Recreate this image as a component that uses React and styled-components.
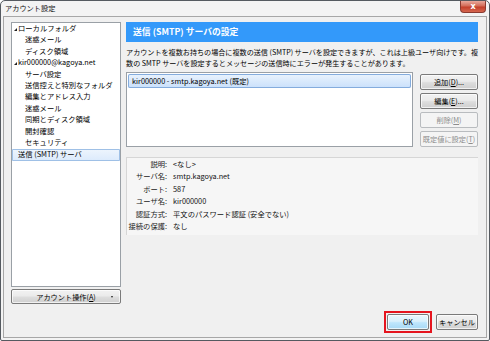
import { Fragment } from 'react'
import styled, { createGlobalStyle, css } from 'styled-components'

const GlobalStyle = createGlobalStyle`
    html, body {
        margin: 0;
        padding: 0;
        background: #ffffff;
    }
    body {
        font-family: "Noto Sans CJK JP", "Noto Sans", sans-serif;
        color: #000;
    }
`

const Window = styled.div`
    width: 490px;
    height: 341px;
    box-sizing: border-box;
    border: 1px solid #555a60;
    border-radius: 5px 5px 2px 2px;
    background: #f3f3f3;
    display: flex;
    flex-direction: column;
    overflow: hidden;
`

const TitleBar = styled.div`
    height: 15px;
    display: flex;
    align-items: flex-start;
    justify-content: space-between;
    padding-left: 4px;
`

const TitleText = styled.span`
    font-size: 7.2px;
    line-height: 15px;
    color: #111;
`

const CloseButton = styled.div`
    width: 26px;
    height: 12px;
    margin-right: 3px;
    border: 1px solid #8a3a30;
    border-top: none;
    border-radius: 0 0 4px 4px;
    background: linear-gradient(#e9a99c, #d36c58 45%, #c4402b 55%, #d5664f);
    color: #fff;
    font-family: "DejaVu Sans", sans-serif;
    font-weight: bold;
    font-size: 8px;
    line-height: 11px;
    text-align: center;
    box-sizing: border-box;
`

const Body = styled.div`
    flex: 1;
    margin: 0 2px 2px 2px;
    border: 1px solid #a7a7a7;
    background: #f0f0f0;
    display: flex;
    padding: 5px 8px 7px 7px;
    gap: 5px;
`

const LeftColumn = styled.div`
    width: 111px;
    display: flex;
    flex-direction: column;
    gap: 2px;
    margin-bottom: 26px;
`

const Tree = styled.div`
    flex: 1;
    background: #fff;
    border: 1px solid #9aa0a6;
`

const TreeRow = styled.div`
    height: 11.4px;
    line-height: 11.4px;
    box-sizing: border-box;
    font-size: 7.3px;
    display: flex;
    align-items: center;
    padding-left: ${p => p.$indent}px;
    white-space: nowrap;
    ${p => p.$selected && css`
        background: linear-gradient(#eef5fd, #dbeafc);
        box-shadow: inset 0 0 0 1px #9fc0e6;
        border-radius: 1px;
        height: 12px;
        margin-top: 0.3px;
    `}
`

const Arrow = styled.span`
    width: 0;
    height: 0;
    border-left: 3px solid transparent;
    border-bottom: 3px solid #222;
    margin-right: 1px;
    margin-top: 2px;
`

const Button = styled.div`
    box-sizing: border-box;
    height: 16px;
    border: 1px solid ${p => (p.$disabled ? '#b9bcbf' : '#7a7a7a')};
    border-radius: 2px;
    background: ${p =>
        p.$disabled
            ? '#f4f4f4'
            : p.$primary
            ? 'linear-gradient(#eaf6fd, #d9f0fc 45%, #bee6fd 55%, #a7d9f5)'
            : 'linear-gradient(#f2f2f2, #ebebeb 45%, #dddddd 55%, #cfcfcf)'};
    color: ${p => (p.$disabled ? '#8d8d8d' : '#000')};
    font-size: 7.2px;
    line-height: 14px;
    text-align: center;
    white-space: nowrap;
    box-shadow: inset 0 0 0 1px ${p => (p.$disabled ? 'transparent' : 'rgba(255,255,255,0.7)')};
`

const AccountButton = styled(Button)`
    height: 15px;
    display: flex;
    align-items: center;
    justify-content: center;
    position: relative;
`

const Dot = styled.span`
    position: absolute;
    right: 7px;
    top: 6px;
    width: 0;
    height: 0;
    border-left: 1.5px solid transparent;
    border-right: 1.5px solid transparent;
    border-top: 2px solid #222;
`

const RightColumn = styled.div`
    flex: 1;
    display: flex;
    flex-direction: column;
`

const Header = styled.div`
    height: 20px;
    background: #3399fa;
    color: #fff;
    font-weight: bold;
    font-size: 8.8px;
    line-height: 20px;
    padding-left: 7px;
`

const Description = styled.p`
    margin: 5px 0 3px 0;
    font-size: 7.1px;
    line-height: 11px;
    white-space: nowrap;
`

const ListRow = styled.div`
    display: flex;
    gap: 7px;
    height: 75px;
`

const ListBox = styled.div`
    flex: 1;
    background: #fff;
    border: 1px solid #9aa0a6;
    padding: 1px;
`

const ListItem = styled.div`
    height: 14px;
    line-height: 14px;
    font-size: 7.3px;
    padding-left: 4px;
    background: linear-gradient(#eaf3fd, #c9e0fb);
    box-shadow: inset 0 0 0 1px #84acdd;
    border-radius: 2px;
`

const ButtonColumn = styled.div`
    width: 58px;
    display: flex;
    flex-direction: column;
    gap: 3px;
    padding-top: 2px;
`

const Details = styled.div`
    margin-top: 10px;
    background: #f6f6f6;
    border-top: 1px solid #d6d6d6;
    border-left: 1px solid #d6d6d6;
    display: grid;
    grid-template-columns: 40px 1fr;
    column-gap: 6px;
    grid-auto-rows: 12.4px;
    padding-bottom: 3px;
    font-size: 7.3px;
    line-height: 12.4px;
`

const Label = styled.span`
    text-align: right;
    white-space: nowrap;
    color: #222;
`

const Value = styled.span`
    white-space: nowrap;
    color: #111;
`

const Footer = styled.div`
    margin-top: auto;
    display: flex;
    justify-content: flex-end;
    align-items: center;
    gap: 4px;
`

const FocusFrame = styled.div`
    border: 2px solid #e5141e;
    padding: 1px;
    margin: -3px 0;
`

const FooterButton = styled(Button)`
    width: 42px;
    height: 16px;
`

const Key = styled.span`
    text-decoration: underline;
`

const rows = [
    { text: 'ローカルフォルダ', indent: 2, parent: true },
    { text: '迷惑メール', indent: 13 },
    { text: 'ディスク領域', indent: 13 },
    { text: 'kir000000@kagoya.net', indent: 2, parent: true },
    { text: 'サーバ設定', indent: 13 },
    { text: '送信控えと特別なフォルダ', indent: 13 },
    { text: '編集とアドレス入力', indent: 13 },
    { text: '迷惑メール', indent: 13 },
    { text: '同期とディスク領域', indent: 13 },
    { text: '開封確認', indent: 13 },
    { text: 'セキュリティ', indent: 13 },
    { text: '送信 (SMTP) サーバ', indent: 6, selected: true },
]

const details = [
    ['説明:', '<なし>'],
    ['サーバ名:', 'smtp.kagoya.net'],
    ['ポート:', '587'],
    ['ユーザ名:', 'kir000000'],
    ['認証方式:', '平文のパスワード認証 (安全でない)'],
    ['接続の保護:', 'なし'],
]

export default function App() {
    return (
        <>
        <GlobalStyle />
        <Window>
            <TitleBar>
                <TitleText>アカウント設定</TitleText>
                <CloseButton>x</CloseButton>
            </TitleBar>
            <Body>
                <LeftColumn>
                    <Tree>
                        {rows.map((r, i) => (
                            <TreeRow key={i} $indent={r.indent} $selected={r.selected}>
                                {r.parent && <Arrow />}
                                {r.text}
                            </TreeRow>
                        ))}
                    </Tree>
                    <AccountButton>
                        アカウント操作(<Key>A</Key>)
                        <Dot />
                    </AccountButton>
                </LeftColumn>
                <RightColumn>
                    <Header>送信 (SMTP) サーバの設定</Header>
                    <Description>
                        アカウントを複数お持ちの場合に複数の送信 (SMTP) サーバを設定できますが、これは上級ユーザ向けです。複
                        <br />
                        数の SMTP サーバを設定するとメッセージの送信時にエラーが発生することがあります。
                    </Description>
                    <ListRow>
                        <ListBox>
                            <ListItem>kir000000 - smtp.kagoya.net (既定)</ListItem>
                        </ListBox>
                        <ButtonColumn>
                            <Button>追加(<Key>D</Key>)...</Button>
                            <Button>編集(<Key>E</Key>)...</Button>
                            <Button $disabled>削除(<Key>M</Key>)</Button>
                            <Button $disabled>既定値に設定(<Key>T</Key>)</Button>
                        </ButtonColumn>
                    </ListRow>
                    <Details>
                        {details.map(([l, v]) => (
                            <Fragment key={l}>
                                <Label>{l}</Label>
                                <Value>{v}</Value>
                            </Fragment>
                        ))}
                    </Details>
                    <Footer>
                        <FocusFrame>
                            <FooterButton $primary>OK</FooterButton>
                        </FocusFrame>
                        <FooterButton>キャンセル</FooterButton>
                    </Footer>
                </RightColumn>
            </Body>
        </Window>
        </>
    )
}
